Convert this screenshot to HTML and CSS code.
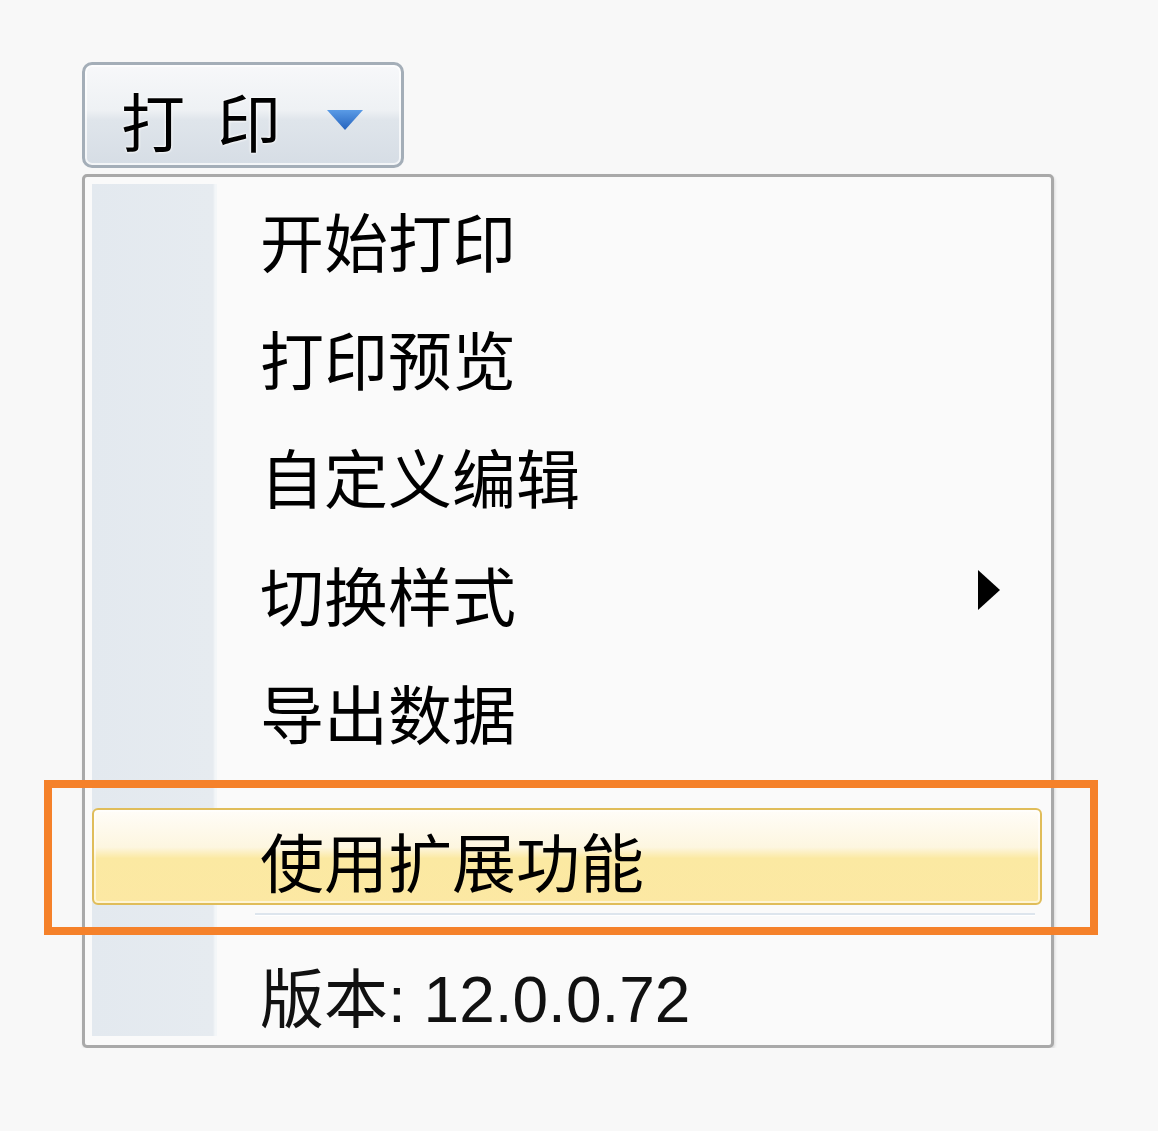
FILE: index.html
```html
<!DOCTYPE html>
<html lang="zh-CN">
<head>
    <meta charset="UTF-8">
    <title>打印菜单</title>
    <link rel="stylesheet" href="styles.css">
</head>
<body>
    <div class="page">
        <button class="print-btn">
            <span class="print-label">打印</span>
            <svg class="drop-arrow" width="36" height="20" viewBox="0 0 36 20">
                <defs>
                    <linearGradient id="arrowFill" x1="0" y1="0" x2="0" y2="1">
                        <stop offset="0" stop-color="#5a9be6"/>
                        <stop offset="1" stop-color="#2462bd"/>
                    </linearGradient>
                </defs>
                <polygon points="0,0 36,0 18,20" fill="url(#arrowFill)"/>
            </svg>
        </button>

        <div class="menu">
            <ul class="menu-list">
                <li class="menu-item">开始打印</li>
                <li class="menu-item">打印预览</li>
                <li class="menu-item">自定义编辑</li>
                <li class="menu-item has-sub">切换样式<span class="sub-arrow"></span></li>
                <li class="menu-item">导出数据</li>
                <li class="menu-item active">使用扩展功能</li>
                <li class="menu-sep"></li>
                <li class="menu-item version">版本: 12.0.0.72</li>
            </ul>
        </div>

        <!-- annotation frame drawn over the menu -->
        <div class="mark"></div>
    </div>
</body>
</html>
```

FILE: styles.css
```css
/* Page */
body {
    margin: 0;
    background-color: #f8f8f8;
    font-family: "Liberation Sans", "Noto Sans CJK SC", sans-serif;
    color: #000;
}

.page {
    position: relative;
    padding: 62px 0 0 82px;
}

/* Print button */
.print-btn {
    box-sizing: border-box;
    width: 322px;
    height: 106px;
    padding: 8px 0 0 36px;
    border: 3px solid #a4aeb8;
    border-radius: 10px;
    background: linear-gradient(to bottom, #f7f8fa 0%, #eef1f4 45%, #dfe5eb 55%, #d6dde5 100%);
    box-shadow: inset 0 0 0 2px rgba(255, 255, 255, 0.7);
    display: flex;
    align-items: center;
    font-family: "Noto Sans CJK SC", sans-serif;
    font-size: 64px;
    color: #000;
    cursor: pointer;
}

.print-label {
    letter-spacing: 32px;
    text-shadow: 0 0 3px #fff, 0 0 3px #fff;
}

.drop-arrow {
    margin-left: 14px;
    margin-top: 2px;
    display: block;
}

/* Menu */
.menu {
    box-sizing: border-box;
    width: 972px;
    height: 874px;
    margin-top: 6px;
    padding: 7px 9px 9px 7px;
    border: 3px solid #a9a9a9;
    border-radius: 5px;
    background-color: #fafafa;
    box-shadow: 1px 2px 3px rgba(0, 0, 0, 0.12);
}

.menu-list {
    list-style: none;
    margin: 0;
    padding: 2px 0 0 0;
    height: 100%;
    box-sizing: border-box;
    /* left gutter */
    background: linear-gradient(to right, #e3e9ef 0, #e6ebf0 121px, #f3f6f8 123px, #f3f6f8 125px, transparent 125px);
}

.menu-item {
    box-sizing: border-box;
    height: 118px;
    padding-left: 168px;
    display: flex;
    align-items: center;
    font-size: 64px;
    line-height: 1;
    white-space: nowrap;
}

.has-sub {
    padding-right: 42px;
}

.sub-arrow {
    margin-left: auto;
    margin-bottom: 18px;
    width: 0;
    height: 0;
    border-left: 22px solid #000;
    border-top: 20px solid transparent;
    border-bottom: 20px solid transparent;
}

/* Hovered item */
.menu-item.active {
    height: 97px;
    margin-top: 32px;
    padding-top: 16px;
    padding-left: 166px;
    border: 2px solid #e0bd5a;
    border-radius: 6px;
    background: linear-gradient(to bottom, #fffdf8 0%, #fdf6e0 40%, #fbe9a2 52%, #fce8a3 100%);
    box-shadow: inset 0 0 0 2px rgba(255, 255, 255, 0.55);
}

.menu-sep {
    height: 2px;
    margin: 8px 7px 0 163px;
    background-color: #dde5ed;
    border-bottom: 1px solid #fff;
}

.menu-item.version {
    height: 120px;
    padding-top: 48px;
    color: #111;
}

/* Orange annotation frame */
.mark {
    position: absolute;
    left: 44px;
    top: 780px;
    width: 1054px;
    height: 155px;
    box-sizing: border-box;
    border: 8px solid #f5812a;
}
```
